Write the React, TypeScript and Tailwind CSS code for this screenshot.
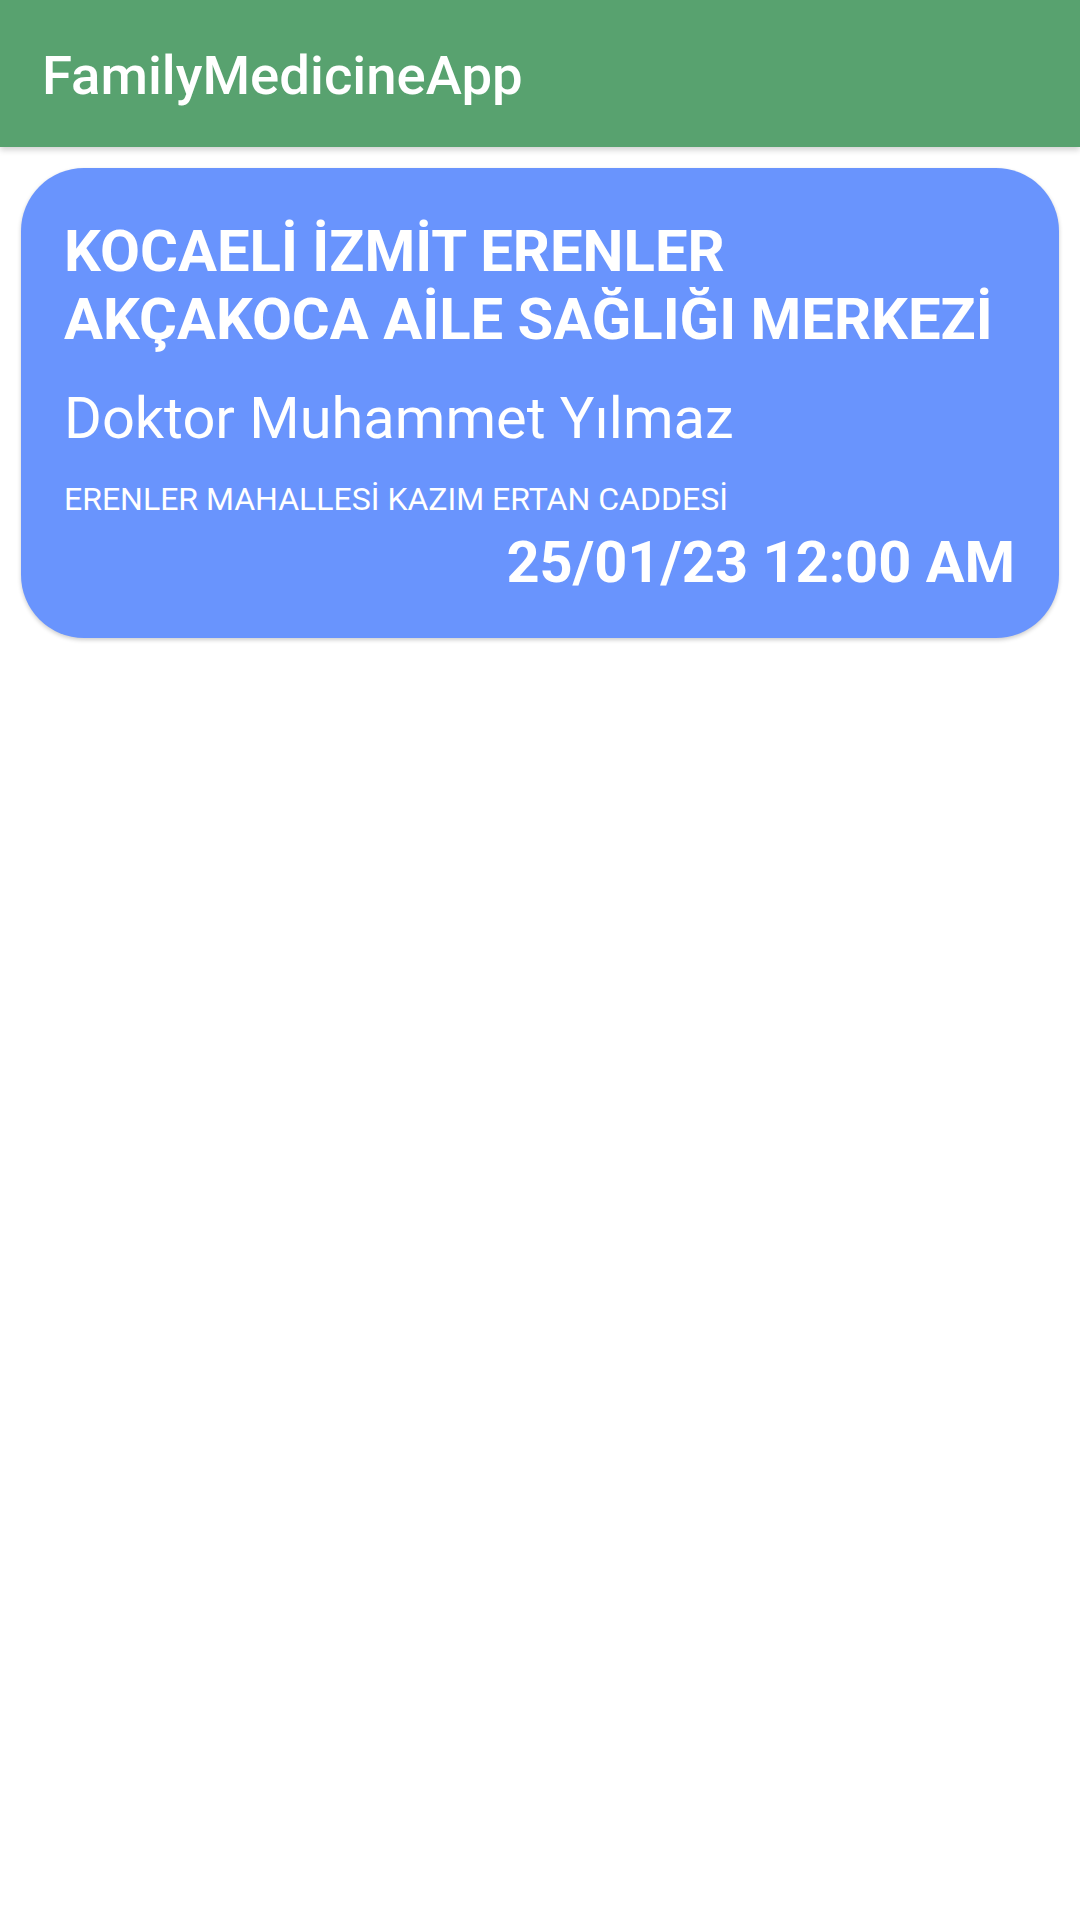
export default function App() {
  return (
    <div className="min-h-screen bg-white" style={{ fontFamily: "Roboto, 'Noto Sans', sans-serif" }}>
      {/* Toolbar */}
      <header className="h-[147px] bg-[#58a26f] flex items-center pl-[42px] pt-[4px] shadow-[0_3px_6px_rgba(0,0,0,0.18)] relative z-10">
        <h1 className="text-[54.5px] font-medium text-white leading-[1.172]">FamilyMedicineApp</h1>
      </header>

      {/* List */}
      <main className="px-[21px] pt-[21px]">
        <div className="rounded-[63px] bg-[#6994fd] shadow-[0_2px_4px_rgba(0,0,0,0.2)] pl-[43px] pr-[44px] pt-[50px] pb-[41px] text-white">
          <h2 className="text-[58px] font-bold leading-[1.172]">
            KOCAELİ İZMİT ERENLER AKÇAKOCA AİLE SAĞLIĞI MERKEZİ
          </h2>
          <p className="mt-[31px] text-[57.75px] font-normal leading-[1.172]">Doktor Muhammet Yılmaz</p>
          <p className="mt-[28px] text-[32px] font-normal leading-[1.172]">ERENLER MAHALLESİ KAZIM ERTAN CADDESİ</p>
          <p className="mt-[11px] text-right text-[57.75px] font-bold leading-[1.172]">25/01/23 12:00 AM</p>
        </div>
      </main>
    </div>
  );
}
